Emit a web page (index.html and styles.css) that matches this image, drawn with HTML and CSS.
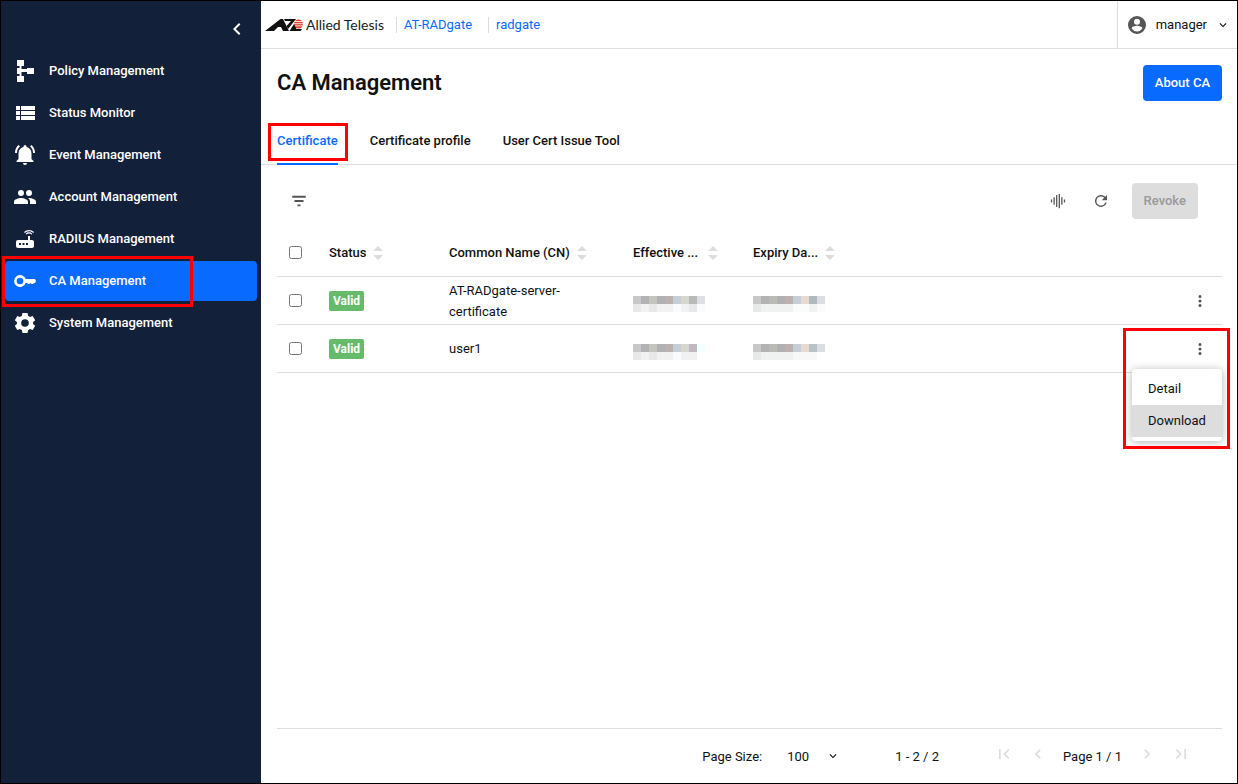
FILE: index.html
```
<!DOCTYPE html>
<html lang="en">
<head>
<meta charset="utf-8">
<title>CA Management</title>
<link rel="stylesheet" href="styles.css">
</head>
<body>
<svg class="defs" aria-hidden="true">
  <defs>
    <symbol id="sort" viewBox="0 0 10 14"><path d="M5 0l5 5H0zM5 14l5-5H0z"/></symbol>
    <symbol id="more" viewBox="0 0 24 24"><path d="M12 8a2 2 0 1 0 0-4 2 2 0 0 0 0 4zm0 2a2 2 0 1 0 0 4 2 2 0 0 0 0-4zm0 6a2 2 0 1 0 0 4 2 2 0 0 0 0-4z"/></symbol>
    <symbol id="chevron-down" viewBox="0 0 24 24"><path d="M7.4 8.6L12 13.2l4.6-4.6L18 10l-6 6-6-6z"/></symbol>
    <symbol id="chevron-left" viewBox="0 0 24 24"><path d="M15.4 7.4L14 6l-6 6 6 6 1.4-1.4L10.8 12z"/></symbol>
    <symbol id="chevron-right" viewBox="0 0 24 24"><path d="M8.6 16.6l4.6-4.6-4.6-4.6L10 6l6 6-6 6z"/></symbol>
  </defs>
</svg>

<aside class="sidebar">
  <div class="sidebar-top">
    <button class="icon-button collapse" aria-label="Collapse"><svg class="icon-24"><use href="#chevron-left"/></svg></button>
  </div>
  <nav class="nav">
    <a class="nav-item" href="#"><svg class="nav-icon" viewBox="0 0 24 24"><path d="M4 1h7v6H8.500v3H14V9h7v6h-7v-2H8.500v4H11v6H4v-6h2.500v-2H4V9h2.500V7H4z"/></svg>Policy Management</a>
    <a class="nav-item" href="#"><svg class="nav-icon" viewBox="0 0 24 24"><path d="M3 5h4v4H3zM8 5h14v4H8zM3 10h4v4H3zM8 10h14v4H8zM3 15h4v4H3zM8 15h14v4H8z"/></svg>Status Monitor</a>
    <a class="nav-item" href="#"><svg class="nav-icon" viewBox="0 0 24 24"><path d="M12 22a2 2 0 0 0 2-2h-4a2 2 0 0 0 2 2zM18.500 16v-5.500c0-3.400-2-5.700-5-6.400V3.500a1.500 1.500 0 0 0-3 0v.6c-3 .7-5 3-5 6.400V16l-2 2v1h17v-1zM7 3.500L5.600 2C3.200 3.900 2 6.600 2 10h2c0-2.700 1-5 3-6.500zM20 10h2c0-3.400-1.200-6.100-3.600-8L17 3.500c2 1.500 3 3.800 3 6.500z"/></svg>Event Management</a>
    <a class="nav-item" href="#"><svg class="nav-icon" viewBox="0 0 24 24"><path d="M16 11a3 3 0 1 0 0-6 3 3 0 0 0 0 6zm-8 0a3 3 0 1 0 0-6 3 3 0 0 0 0 6zm0 2c-2.300 0-7 1.200-7 3.500V19h14v-2.500C15 14.200 10.300 13 8 13zm8 0c-.3 0-.6 0-1 .1 1.200.8 2 2 2 3.400V19h6v-2.500c0-2.300-4.700-3.500-7-3.500z"/></svg>Account Management</a>
    <a class="nav-item" href="#"><svg class="nav-icon" viewBox="0 0 24 24"><path d="M20.200 5.900l.8-.8A7 7 0 0 0 16 3a7 7 0 0 0-5 2.100l.8.8A6 6 0 0 1 16 4.200c1.500 0 3 .6 4.200 1.700zm-.9.800A4.700 4.700 0 0 0 16 5.300c-1.200 0-2.400.5-3.300 1.400l.8.800A3.600 3.600 0 0 1 16 6.500c.9 0 1.800.3 2.500 1zM19 13h-2V9h-2v4H5a2 2 0 0 0-2 2v4c0 1.100.9 2 2 2h14a2 2 0 0 0 2-2v-4a2 2 0 0 0-2-2zM8 18H6v-2h2zm3.500 0h-2v-2h2zm3.500 0h-2v-2h2z"/></svg>RADIUS Management</a>
    <a class="nav-item active" href="#" aria-current="page"><svg class="nav-icon" viewBox="0 0 24 24"><path fill-rule="evenodd" d="M22 10H12.700A6 6 0 1 0 12.700 14H14l1 1h1.500l1-1 1 1H20l1-1h1l1-2zM7 8.700a3.300 3.300 0 1 1 0 6.600 3.300 3.300 0 0 1 0-6.600z"/></svg>CA Management<span class="mark mark-nav"></span></a>
    <a class="nav-item" href="#"><svg class="nav-icon" viewBox="0 0 24 24"><path fill-rule="evenodd" d="M9.500 2h5l.6 2.800 1.900 1.100 2.700-.9 2.500 4.200-2.100 1.900v1.800l2.100 1.900-2.500 4.200-2.700-.9-1.900 1.100-.6 2.800h-5l-.6-2.800L7 18.100l-2.700.9-2.500-4.200 2.100-1.900v-1.800L1.800 9.200 4.300 5l2.700.9 1.900-1.100zM12 8.200a3.800 3.800 0 1 0 0 7.600 3.800 3.800 0 0 0 0-7.600z"/></svg>System Management</a>
  </nav>
</aside>

<main class="main">
  <header class="topbar">
    <a class="brand" href="#">
      <svg class="brand-mark" viewBox="0 0 38 12"><path fill="#111" d="M0 12L15.500 0H18l6 12h-6l-2-4h-3l-4 4z"/><path fill="#111" d="M19 0h12l-8 10-1.500-3L26 2h-6z"/><circle cx="33.500" cy="5" r="4.500" fill="#e2402f"/><path stroke="#fff" stroke-width=".8" d="M29 2.500h9M29 4.700h9M29 6.900h9"/><path fill="#111" d="M24.500 12L29 5l2.500 5H37l-1.500 2z"/></svg>
      <span>Allied Telesis</span>
    </a>
    <a class="crumb" href="#">AT-RADgate</a>
    <a class="crumb" href="#">radgate</a>
    <button class="user">
      <svg class="user-icon" viewBox="0 0 20 20"><path fill-rule="evenodd" d="M10 1a9 9 0 1 0 0 18 9 9 0 0 0 0-18zm0 2.700a3 3 0 1 1 0 6 3 3 0 0 1 0-6zm0 12.800a6.500 6.500 0 0 1-5.400-2.900c0-1.800 3.600-2.800 5.400-2.800s5.400 1 5.400 2.800a6.500 6.500 0 0 1-5.400 2.900z"/></svg>
      <span>manager</span>
      <svg class="icon-14"><use href="#chevron-down"/></svg>
    </button>
  </header>

  <div class="title-row">
    <h1>CA Management</h1>
    <button class="button primary">About CA</button>
  </div>

  <nav class="tabs">
    <a class="tab selected" href="#">Certificate<span class="mark mark-tab"></span></a>
    <a class="tab" href="#">Certificate profile</a>
    <a class="tab" href="#">User Cert Issue Tool</a>
  </nav>

  <div class="toolbar">
    <button class="icon-button filter" aria-label="Filter"><svg class="icon-18" viewBox="0 0 24 24"><path d="M10 19h4v-2.500h-4zM3 5v2.500h18V5zm3 8.200h12v-2.500H6z"/></svg></button>
    <button class="icon-button" aria-label="Columns"><svg class="icon-18" viewBox="0 0 24 24"><path d="M2.500 10h1.700v4H2.500zM6 7h1.700v10H6zM9.400 4h1.700v16H9.400zM12.900 2.500h1.700v19h-1.700zM16.300 7H18v10h-1.700zM19.800 10h1.700v4h-1.700z"/></svg></button>
    <button class="icon-button" aria-label="Reload"><svg class="icon-18" viewBox="0 0 24 24"><path d="M17.700 6.300A8 8 0 1 0 19.700 14h-2.100A6 6 0 1 1 12 6c1.700 0 3.100.7 4.200 1.800L13 11h7V4z"/></svg></button>
    <button class="button revoke" disabled>Revoke</button>
  </div>

  <div class="table-area">
    <table>
      <colgroup><col class="col-check"><col class="col-date"><col class="col-name"><col class="col-date"><col class="col-date"><col><col class="col-menu"></colgroup>
      <thead>
        <tr>
          <th><input type="checkbox" aria-label="Select all"></th>
          <th><div class="head">Status<svg class="sort"><use href="#sort"/></svg></div></th>
          <th><div class="head">Common Name (CN)<svg class="sort"><use href="#sort"/></svg></div></th>
          <th><div class="head"><span class="head-wide">Effective ...</span><svg class="sort"><use href="#sort"/></svg></div></th>
          <th><div class="head">Expiry Da...<svg class="sort"><use href="#sort"/></svg></div></th>
          <th></th>
          <th></th>
        </tr>
      </thead>
      <tbody>
        <tr>
          <td><input type="checkbox" aria-label="Select AT-RADgate-server-certificate"></td>
          <td><span class="badge">Valid</span></td>
          <td>AT-RADgate-server-certificate</td>
          <td><svg class="mosaic" viewBox="0 0 9 2"><path fill="#c8c8c9" d="M0 0h1v1H0z"/><path fill="#b3b3b5" d="M1 0h1v1H1z"/><path fill="#c5c5bf" d="M2 0h1v1H2z"/><path fill="#b1b1b4" d="M3 0h1v1H3z"/><path fill="#bbb1af" d="M4 0h1v1H4z"/><path fill="#c5d0d6" d="M5 0h1v1H5z"/><path fill="#d7d7d2" d="M6 0h1v1H6z"/><path fill="#b9b9ba" d="M7 0h1v1H7z"/><path fill="#dddfe5" d="M8 0h1v1H8z"/><path fill="#e8e8e9" d="M0 1h1v1H0zM2 1h1v1H2zM7 1h1v1H7z"/><path fill="#f2f2f2" d="M1 1h1v1H1zM3 1h2v1H3zM6 1h1v1H6z"/><path fill="#fafbfc" d="M5 1h1v1H5zM8 1h1v1H8z"/></svg></td>
          <td><svg class="mosaic" viewBox="0 0 9 2"><path fill="#c8c8c9" d="M0 0h1v1H0z"/><path fill="#b3b3b3" d="M1 0h1v1H1z"/><path fill="#bbbbb5" d="M2 0h1v1H2z"/><path fill="#b1b1b4" d="M3 0h1v1H3z"/><path fill="#bbb1af" d="M4 0h1v1H4z"/><path fill="#c5d0d6" d="M5 0h1v1H5z"/><path fill="#e6dbd0" d="M6 0h1v1H6z"/><path fill="#b0b9bf" d="M7 0h1v1H7z"/><path fill="#dadee4" d="M8 0h1v1H8z"/><path fill="#e8e8e9" d="M0 1h1v1H0z"/><path fill="#f0f1f1" d="M1 1h4v1H1zM7 1h1v1H7z"/><path fill="#fbfbfb" d="M5 1h2v1H5zM8 1h1v1H8z"/></svg></td>
          <td></td>
          <td><button class="icon-button" aria-label="Row actions"><svg class="icon-18"><use href="#more"/></svg></button></td>
        </tr>
        <tr>
          <td><input type="checkbox" aria-label="Select user1"></td>
          <td><span class="badge">Valid</span></td>
          <td>user1</td>
          <td><svg class="mosaic" viewBox="0 0 9 2"><path fill="#c8c8c9" d="M0 0h1v1H0z"/><path fill="#b3b3b5" d="M1 0h1v1H1z"/><path fill="#c5c5bf" d="M2 0h1v1H2z"/><path fill="#b1b1b4" d="M3 0h1v1H3z"/><path fill="#bbb1af" d="M4 0h1v1H4z"/><path fill="#c5d0d6" d="M5 0h1v1H5z"/><path fill="#d7d7d2" d="M6 0h1v1H6z"/><path fill="#c1b9bf" d="M7 0h1v1H7z"/><path fill="#f2ffff" d="M8 0h1v1H8z"/><path fill="#e8e8e9" d="M0 1h1v1H0zM2 1h1v1H2z"/><path fill="#f1f1f1" d="M1 1h1v1H1zM3 1h2v1H3zM6 1h2v1H6z"/><path fill="#fafbfc" d="M5 1h1v1H5z"/></svg></td>
          <td><svg class="mosaic" viewBox="0 0 9 2"><path fill="#c8c8c9" d="M0 0h1v1H0z"/><path fill="#b3b3b3" d="M1 0h1v1H1z"/><path fill="#bbbbb5" d="M2 0h1v1H2z"/><path fill="#b1b1b4" d="M3 0h1v1H3z"/><path fill="#bbb1af" d="M4 0h1v1H4z"/><path fill="#c5d0d6" d="M5 0h1v1H5z"/><path fill="#e6dbd0" d="M6 0h1v1H6z"/><path fill="#bbc1c8" d="M7 0h1v1H7z"/><path fill="#dadee4" d="M8 0h1v1H8z"/><path fill="#e8e8e9" d="M0 1h1v1H0z"/><path fill="#f0f1f1" d="M1 1h4v1H1z"/><path fill="#f8f8f8" d="M5 1h3v1H5z"/></svg></td>
          <td></td>
          <td class="menu-cell">
            <button class="icon-button" aria-label="Row actions" aria-expanded="true"><svg class="icon-18"><use href="#more"/></svg></button>
            <div class="menu">
              <button class="menu-item">Detail</button>
              <button class="menu-item hovered">Download</button>
              <span class="mark mark-menu"></span>
            </div>
          </td>
        </tr>
      </tbody>
    </table>
  </div>

  <footer class="pager">
    <label for="page-size">Page Size:</label>
    <span class="select-wrap">
      <select id="page-size"><option>100</option></select>
      <svg class="icon-14"><use href="#chevron-down"/></svg>
    </span>
    <span class="range">1 - 2 / 2</span>
    <span class="pages">
      <button class="icon-button" disabled aria-label="First page"><svg class="icon-20" viewBox="0 0 24 24"><path d="M18.400 16.600L13.800 12l4.600-4.600L17 6l-6 6 6 6zM6 6h2v12H6z"/></svg></button>
      <button class="icon-button" disabled aria-label="Previous page"><svg class="icon-20"><use href="#chevron-left"/></svg></button>
      <span class="page-label">Page 1 / 1</span>
      <button class="icon-button" disabled aria-label="Next page"><svg class="icon-20"><use href="#chevron-right"/></svg></button>
      <button class="icon-button" disabled aria-label="Last page"><svg class="icon-20" viewBox="0 0 24 24"><path d="M5.600 7.400l4.600 4.600-4.600 4.600L7 18l6-6-6-6zM16 6h2v12h-2z"/></svg></button>
    </span>
  </footer>
</main>
</body>
</html>
```
FILE: styles.css
```
* {
  box-sizing: border-box;
}

body {
  margin: 0;
  min-height: 100vh;
  display: flex;
  border: 1px solid #000;
  background: #fff;
  color: #111;
  font: 13px/21px Roboto, sans-serif;
}

a {
  color: inherit;
  text-decoration: none;
}

button,
select {
  font: inherit;
  color: inherit;
  border: 0;
  padding: 0;
  background: none;
}

svg {
  display: block;
  flex: none;
  fill: currentColor;
}

.defs {
  position: absolute;
  width: 0;
  height: 0;
}

.icon-14 { width: 14px; height: 14px; }
.icon-18 { width: 18px; height: 18px; }
.icon-20 { width: 20px; height: 20px; }
.icon-24 { width: 24px; height: 24px; }

.icon-button {
  display: flex;
  align-items: center;
  justify-content: center;
  width: 24px;
  height: 24px;
  color: #555;
}

/* Callout frames drawn over the controls they point at */
.mark {
  position: absolute;
  border: 3px solid #f00;
  pointer-events: none;
}

.mark-nav { inset: -5px 64px -6px -3px; }
.mark-tab { inset: 6px -10px 2px -9px; }
.mark-menu { inset: -41px -8px -8px -9px; }

/* Sidebar */
.sidebar {
  flex: none;
  width: 260px;
  background: #13203a;
  color: #fff;
}

.sidebar-top {
  display: flex;
  justify-content: flex-end;
  padding: 16px 12px 10px;
}

.collapse {
  color: #fff;
}

.nav {
  display: flex;
  flex-direction: column;
  gap: 2px;
  padding: 0 4px;
}

.nav-item {
  position: relative;
  display: flex;
  align-items: center;
  gap: 12px;
  height: 40px;
  padding: 0 8px;
  border-radius: 4px;
  line-height: 20px;
  font-weight: 500;
}

.nav-item.active {
  background: #086aff;
}

.nav-icon {
  width: 24px;
  height: 24px;
}

/* Top bar */
.main {
  flex: 1;
  min-width: 0;
  display: flex;
  flex-direction: column;
}

.topbar {
  display: flex;
  align-items: center;
  height: 48px;
  border-bottom: 1px solid #ddd;
}

.brand {
  display: flex;
  align-items: center;
  gap: 3px;
  margin: 0 12px 0 4px;
  font: 14px/20px Lato, sans-serif;
  color: #222;
}

.brand-mark {
  width: 38px;
  height: 12px;
}

.crumb {
  height: 16px;
  padding: 0 16px 0 7px;
  border-left: 1px solid #ddd;
  line-height: 16px;
  color: #086aff;
}

.user {
  display: flex;
  align-items: center;
  align-self: stretch;
  gap: 9px;
  margin-left: auto;
  padding: 0 7px 0 9px;
  border-left: 1px solid #ddd;
}

.user-icon {
  width: 20px;
  height: 20px;
  color: #555;
}

/* Title and tabs */
.title-row {
  display: flex;
  align-items: center;
  justify-content: space-between;
  padding: 16px 15px 16px 16px;
}

h1 {
  margin: 0;
  font-size: 22px;
  line-height: 32px;
  font-weight: 600;
}

.button {
  height: 36px;
  padding: 0 12px;
  border-radius: 4px;
  line-height: 20px;
  font-weight: 500;
}

.primary {
  background: #086aff;
  color: #fff;
}

.revoke {
  background: #ddd;
  color: #999;
}

.tabs {
  display: flex;
  gap: 32px;
  height: 48px;
  padding: 0 16px;
  border-bottom: 1px solid #ddd;
}

.tab {
  position: relative;
  height: 48px;
  line-height: 48px;
  font-weight: 500;
}

.tab.selected {
  color: #086aff;
  border-bottom: 2px solid #086aff;
}

/* Toolbar */
.toolbar {
  display: flex;
  align-items: center;
  gap: 19px;
  padding: 18px 39px 10px 26px;
}

.filter {
  margin-right: auto;
}

/* Table */
.table-area {
  flex: 1;
  padding: 0 15px 0 16px;
}

table {
  width: 100%;
  table-layout: fixed;
  border-collapse: separate;
  border-spacing: 0;
}

.col-check { width: 40px; }
.col-date { width: 120px; }
.col-name { width: 184px; }
.col-menu { width: 46px; }

th,
td {
  height: 48px;
  padding: 2px 12px;
  border-bottom: 1px solid #ddd;
  text-align: left;
  vertical-align: middle;
}

th {
  font-weight: 500;
  white-space: nowrap;
}

input[type="checkbox"] {
  display: block;
  width: 13px;
  height: 13px;
  margin: 0;
}

.head {
  display: flex;
  align-items: center;
  gap: 7px;
}

.head-wide {
  min-width: 68px;
}

.sort {
  width: 10px;
  height: 14px;
  color: #ddd;
}

.badge {
  display: inline-block;
  padding: 0 4px;
  border-radius: 2px;
  background: #66bb6a;
  color: #fff;
  font-size: 12px;
  line-height: 20px;
  font-weight: 700;
}

.mosaic {
  width: 72px;
  height: 16px;
  margin-top: 7px;
}

/* Row menu */
.menu-cell {
  position: relative;
}

.menu {
  position: absolute;
  top: 44px;
  right: 0;
  z-index: 1;
  width: 90px;
  padding: 4px 0;
  border-radius: 4px;
  background: #fff;
  box-shadow: 0 1px 8px rgba(0, 0, 0, 0.3);
}

.menu-item {
  display: block;
  width: 100%;
  height: 32px;
  padding: 0 16px 1px;
  line-height: 20px;
  text-align: left;
}

.menu-item.hovered {
  background: #ddd;
}

/* Pager */
.pager {
  display: flex;
  align-items: center;
  justify-content: flex-end;
  height: 55px;
  margin: 0 15px 0 16px;
  padding-right: 29px;
  border-top: 1px solid #ddd;
}

.select-wrap {
  position: relative;
  display: flex;
  align-items: center;
  margin-left: 25px;
}

select {
  width: 54px;
  height: 24px;
  appearance: none;
}

.select-wrap svg {
  position: absolute;
  right: 1px;
  pointer-events: none;
}

.range {
  margin-left: 54px;
}

.pages {
  display: flex;
  align-items: center;
  gap: 10px;
  margin-left: 53px;
}

.pages .icon-button {
  margin-bottom: 4px;
  color: #ddd;
}

.page-label {
  margin: 0 3px;
}
```
